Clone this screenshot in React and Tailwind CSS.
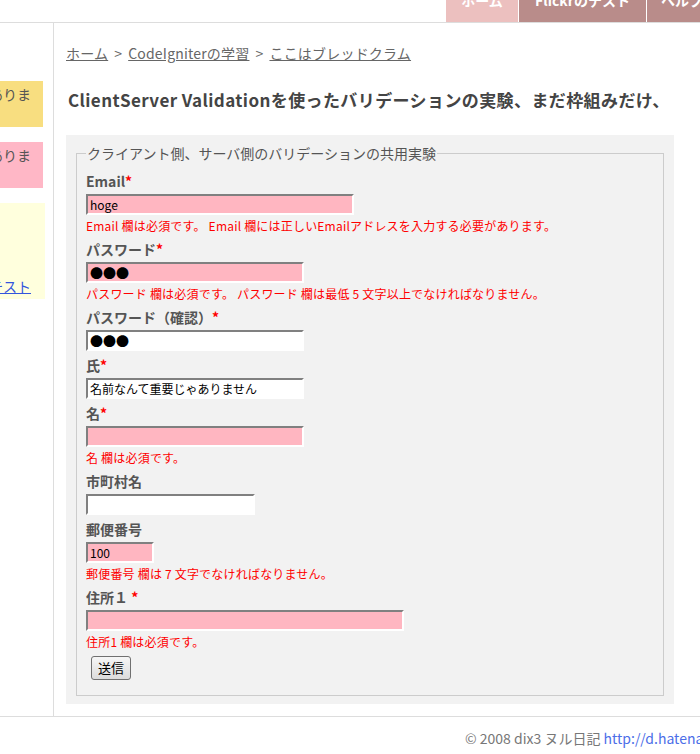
const fields = [
  {
    label: "Email",
    req: true,
    width: "w-[268px]",
    pink: true,
    value: "hoge",
    error: "Email 欄は必須です。 Email 欄には正しいEmailアドレスを入力する必要があります。",
  },
  {
    label: "パスワード",
    req: true,
    width: "w-[218px]",
    pink: true,
    value: "●●●",
    dots: true,
    error: "パスワード 欄は必須です。 パスワード 欄は最低 5 文字以上でなければなりません。",
  },
  { label: "パスワード（確認）", req: true, width: "w-[218px]", value: "●●●", dots: true },
  { label: "氏", req: true, width: "w-[218px]", value: "名前なんて重要じゃありません" },
  { label: "名", req: true, width: "w-[218px]", pink: true, value: "", error: "名 欄は必須です。" },
  { label: "市町村名", width: "w-[169px]", value: "" },
  {
    label: "郵便番号",
    width: "w-[68px]",
    pink: true,
    value: "100",
    error: "郵便番号 欄は 7 文字でなければなりません。",
  },
  { label: "住所１ ", req: true, width: "w-[318px]", pink: true, value: "", error: "住所1 欄は必須です。" },
];

function Field({ label, req, width, pink, value, dots, error }) {
  return (
    <div className="mt-[4px] first:mt-[8px]">
      <div className="text-[14px] leading-5 font-bold text-[#555]">
        {label}
        {req && <span className="text-[#ff0000]">*</span>}
      </div>
      <input
        readOnly
        type="text"
        value={value}
        className={`mt-[3px] block h-[21px] ${width} border-2 border-t-[#808080] border-l-[#808080] border-b-white border-r-white px-[2px] ${
          pink ? "bg-[#ffb6c1]" : "bg-white"
        } ${dots ? "text-[13px]" : "text-[12px]"} text-black outline-none`}
      />
      {error && (
        <div className="mt-[3px] pb-[1px] text-[12px] leading-4 text-[#ff0000] whitespace-nowrap tracking-[0.2px]">
          {error}
        </div>
      )}
    </div>
  );
}

function SideBox({ className, children }) {
  return (
    <div className={`overflow-hidden ${className}`}>
      <div className="flex justify-end pr-[12px] whitespace-nowrap">{children}</div>
    </div>
  );
}

export default function App() {
  return (
    <div className="w-[700px] h-[754px] overflow-hidden bg-white font-['Noto_Sans_CJK_JP',sans-serif] text-[#555]">
      {/* top tabs, scrolled so only their lower half shows */}
      <div className="flex h-[23px] overflow-hidden border-b border-[#dddddd] pl-[446px]">
        <div className="w-[72px] shrink-0 bg-[#ecc0bf] text-center text-white text-[14px] font-bold">
          <div className="-mt-[10px] leading-5">ホーム</div>
        </div>
        <div className="ml-[1px] w-[127px] shrink-0 bg-[#b98c8a] text-center text-white text-[14px] font-bold">
          <div className="-mt-[10px] leading-5">Flickrのテスト</div>
        </div>
        <div className="ml-[1px] w-[90px] shrink-0 bg-[#b98c8a] pl-[14px] text-white text-[14px] font-bold whitespace-nowrap">
          <div className="-mt-[10px] leading-5">ヘルプ</div>
        </div>
      </div>

      <div className="flex border-b border-[#dddddd]">
        {/* sidebar */}
        <div className="w-[54px] shrink-0 border-r border-[#dddddd] pt-[58px] text-[14px]">
          <SideBox className="w-[43px] h-[46px] bg-[#f8de80]">
            <span className="pt-[3px] leading-5">新しい記事がありま</span>
          </SideBox>
          <SideBox className="mt-[15px] w-[43px] h-[46px] bg-[#ffb7c6]">
            <span className="pt-[3px] leading-5">コメントがありま</span>
          </SideBox>
          <div className="mt-[15px] w-[45px] h-[96px] bg-[#ffffdd] flex flex-col justify-end overflow-hidden pb-[3px]">
            <div className="flex justify-end pr-[14px] whitespace-nowrap leading-5">
              <a href="#" className="text-[#3355dd] underline">Flickrのテスト</a>
            </div>
          </div>
        </div>

        {/* main */}
        <div className="flex-1 pl-[12px] pt-[20px] pb-[12px]">
          <div className="text-[14px] leading-5 text-[#666] tracking-[0.2px]">
            <a href="#" className="underline">ホーム</a>
            <span className="mx-[6px]">&gt;</span>
            <a href="#" className="underline">CodeIgniterの学習</a>
            <span className="mx-[6px]">&gt;</span>
            <a href="#" className="underline">ここはブレッドクラム</a>
          </div>

          <h1 className="mt-[25px] ml-[2px] text-[17px] leading-6 font-bold text-[#444] whitespace-nowrap tracking-[0.4px]">
            ClientServer Validationを使ったバリデーションの実験、まだ枠組みだけ、
          </h1>

          <div className="mt-[23px] w-[608px] bg-[#f2f2f2] px-[10px] pt-[8px] pb-[8px]">
            <fieldset className="border border-[#cccccc] pl-[9px] pb-[15px]">
              <legend className="px-[1px] text-[14px] leading-5 text-[#555]">
                クライアント側、サーバ側のバリデーションの共用実験
              </legend>
              <div>
                {fields.map((f) => (
                  <Field key={f.label} {...f} />
                ))}
              </div>
              <button className="mt-[5px] ml-[5px] h-[24px] w-[40px] rounded-[3px] border border-[#707070] bg-gradient-to-b from-[#f6f6f6] to-[#dcdcdc] text-[13px] leading-4 text-black">
                送信
              </button>
            </fieldset>
          </div>
        </div>
      </div>

      {/* footer */}
      <div className="pl-[465px] pt-[11px] text-[14px] leading-5 text-[#777] whitespace-nowrap">
        © 2008 dix3 ヌル日記{" "}
        <a href="#" className="text-[#4c6ee8]">http://d.hatena.ne.jp/dix3/</a>
      </div>
    </div>
  );
}
